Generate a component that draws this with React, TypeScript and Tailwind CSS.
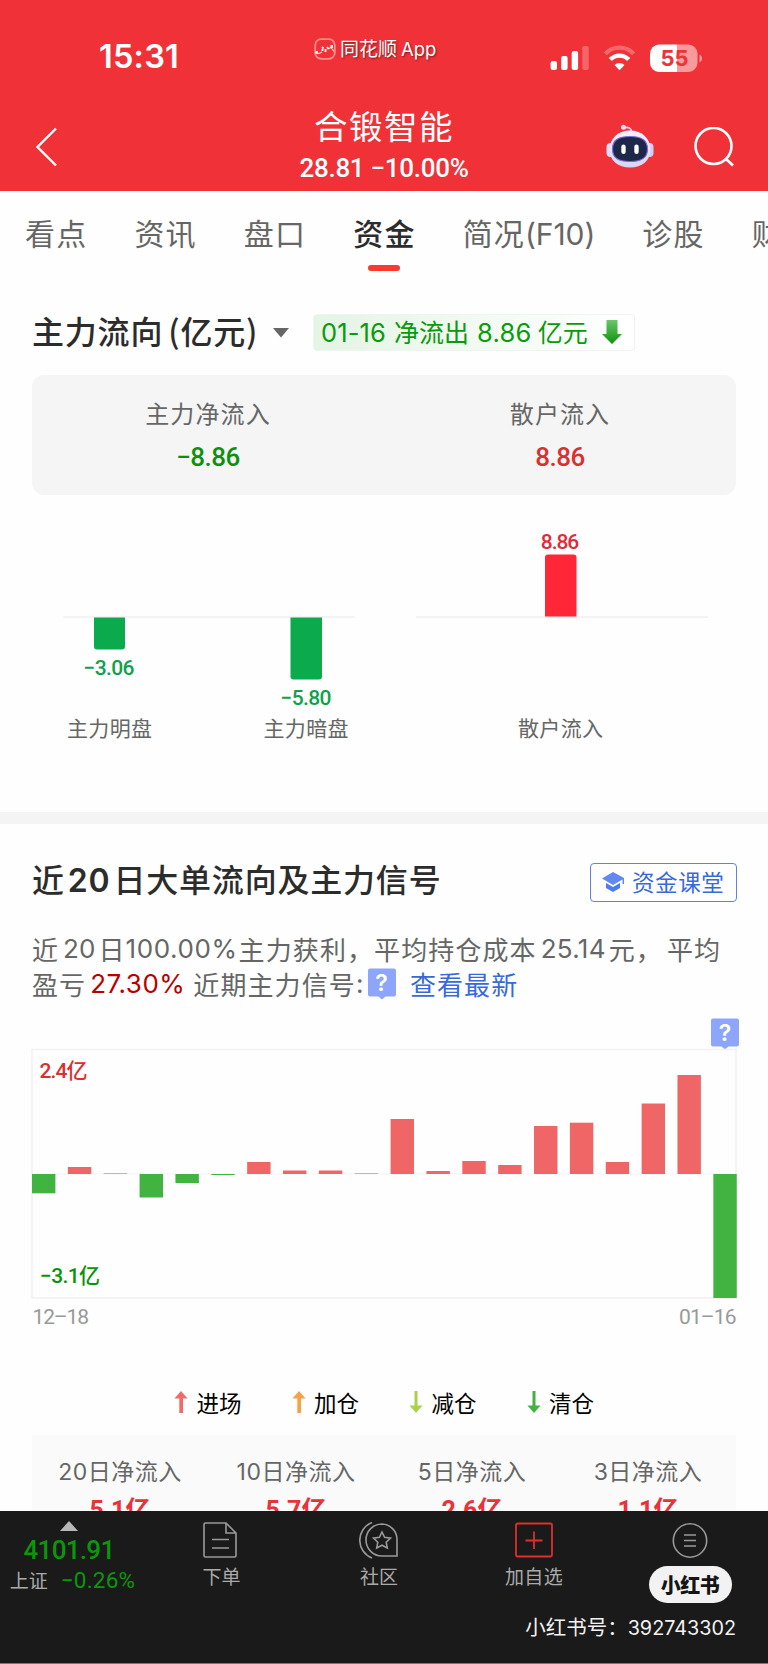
import React from "react";

const tabs = ["看点", "资讯", "盘口", "资金", "简况(F10)", "诊股", "财务"];

const dailyFlow = [
  -19.3, 7, 1, -23.5, -9, -1, 12, 3.5, 3.5, 1, 55, 3, 13, 9, 48, 51.3, 12, 70.5, 99, -124,
];

const legend = [
  { label: "进场", color: "#ee6b68", up: true },
  { label: "加仓", color: "#f9a14a", up: true },
  { label: "减仓", color: "#acd04c", up: false },
  { label: "清仓", color: "#41b340", up: false },
];

const periods = [
  { label: "20日净流入", value: "5.1亿" },
  { label: "10日净流入", value: "5.7亿" },
  { label: "5日净流入", value: "2.6亿" },
  { label: "3日净流入", value: "1.1亿" },
];

function StatusIcons() {
  return (
    <svg width="156" height="30" viewBox="0 0 156 30" fill="#fff">
      <rect x="2.6" y="18" width="6.4" height="9" rx="2" />
      <rect x="13.2" y="13" width="6.4" height="14" rx="2" />
      <rect x="23.7" y="8" width="6.4" height="19" rx="2" />
      <rect x="34.3" y="3" width="6.4" height="24" rx="2" opacity=".25" />
      <g fill="none" stroke="#fff" strokeWidth="4.4">
        <path d="M57.3 10.8a19.5 19.5 0 0 1 28.4 0" opacity=".27" />
        <path d="M62.3 16.6a12.6 12.6 0 0 1 18.4 0" />
      </g>
      <path d="M71.5 27.3l-5-5.2a7.3 7.3 0 0 1 10 0z" />
      <path d="M111 1.5h29.500a9 9 0 0 1 9 9v9.500a9 9 0 0 1-9 9H129V1.500z" opacity=".5" />
      <path d="M129 1.500v27.500h-18a9 9 0 0 1-9-9v-9.500a9 9 0 0 1 9-9z" />
      <path d="M151.500 11.500q2.500 1 2.500 4t-2.500 4z" opacity=".5" />
      <text x="126.500" y="22.500" textAnchor="middle" fill="#f03238" fontFamily="Inter" fontWeight="700" fontSize="22">
        55
      </text>
    </svg>
  );
}

function AppLogo() {
  return (
    <svg width="22" height="22" viewBox="0 0 22 22" fill="none">
      <rect x="1.200" y="1.200" width="19.600" height="19.600" rx="6" stroke="#ff8f88" strokeWidth="1.800" />
      <path d="M1 14.500l4 1 3-1.500M14 11l3-1.500 3 4" stroke="#ffc9c4" strokeWidth="1.200" />
      <path d="M8 9l1.500 1.500M7.500 12.500l2-1M11.500 11v3M13 9l1.500 2" stroke="#fff" strokeWidth="1.800" />
      <path d="M16.500 7h2.500v3h-2.500zM1.500 13h2.500v2.500H1.500z" fill="#fff" />
    </svg>
  );
}

function Robot() {
  return (
    <svg width="48" height="44" viewBox="0 0 48 44">
      <defs>
        <linearGradient id="shell" x1="0" y1="0" x2="0" y2="1">
          <stop offset="0" stopColor="#fbeefc" />
          <stop offset="1" stopColor="#d6d6f4" />
        </linearGradient>
      </defs>
      <path d="M18 3.500q7-1 7.500 4" fill="none" stroke="#f3d3e6" strokeWidth="1.800" />
      <circle cx="17.500" cy="3.300" r="2.500" fill="#ffdcea" />
      <rect x="0.500" y="19" width="8" height="14" rx="4" fill="#dcdcf8" />
      <rect x="39.500" y="19" width="8" height="14" rx="4" fill="#cfcff5" />
      <path d="M24 6.500c12 0 20.500 8 20.500 19S36 43.500 24 43.500 3.500 36.500 3.500 25.500 12 6.500 24 6.500z" fill="url(#shell)" />
      <path
        d="M24 12.500c11 0 17.500 3 17.500 12.500S35 37.500 24 37.500 6.500 34.500 6.500 25 13 12.500 24 12.500z"
        fill="#1c2749"
        stroke="#7a68dc"
        strokeWidth="1.200"
      />
      <rect x="15.300" y="20.500" width="4.400" height="9.500" rx="2.200" fill="#fff" />
      <rect x="28.300" y="20.500" width="4.400" height="9.500" rx="2.200" fill="#fff" />
    </svg>
  );
}

function HelpBubble() {
  return (
    <svg width="28" height="32" viewBox="0 0 28 32" className="shrink-0">
      <path d="M2 .5h24a2 2 0 0 1 2 2v24a2 2 0 0 1-2 2h-8.500L14 31.500l-3.500-3H2a2 2 0 0 1-2-2v-24a2 2 0 0 1 2-2z" fill="#8da6fb" />
      <text x="14" y="22.500" textAnchor="middle" fill="#fff" fontFamily="Inter" fontWeight="600" fontSize="23">
        ?
      </text>
    </svg>
  );
}

function Header() {
  return (
    <header className="h-[191px] bg-[#f03238] text-white">
      <div className="flex h-[105px] items-center pt-[10px]">
        <div className="ml-[99px] w-[215px] font-[Inter] text-[32.500px] font-semibold tracking-[0.200px]">15:31</div>
        <div className="mb-[18px] flex w-[234px] items-center gap-[4px] text-[19px] [text-shadow:1px_1px_2px_rgba(0,0,0,0.5)]">
          <AppLogo />
          <span>
            同花顺<span className="ml-1 font-[Inter] text-[18.500px]">App</span>
          </span>
        </div>
        <StatusIcons />
      </div>
      <div className="flex h-[84px] items-center">
        <svg width="24" height="40" viewBox="0 0 24 40" fill="none" className="ml-9" stroke="#fff" strokeWidth="2.400">
          <path d="M20 1.500L1.500 20 20 38.500" />
        </svg>
        <div className="-mt-[6px] ml-[204px] flex w-[240px] flex-col items-center">
          <h1 className="text-[33.500px] leading-9 tracking-[1.500px]">合锻智能</h1>
          <p className="mt-[11px] font-[Roboto] text-[26px] font-medium leading-7 tracking-[-0.300px]">28.81 −10.00%</p>
        </div>
        <div className="-mt-[2px] ml-[102px]">
          <Robot />
        </div>
        <svg width="40" height="40" viewBox="0 0 40 40" fill="none" className="ml-10" stroke="#fff" strokeWidth="2.600">
          <circle cx="19.500" cy="19" r="18" />
          <path d="M31.500 31.500l7.500 7" />
        </svg>
      </div>
    </header>
  );
}

function Tabs() {
  return (
    <nav className="flex h-[84px] gap-[47px] overflow-hidden whitespace-nowrap pl-[25px] pt-[20px] text-[30px] leading-[42px] text-[#666]">
      {tabs.map((tab) => (
        <div key={tab} className="flex shrink-0 flex-col items-center">
          {tab === "资金" ? (
            <>
              <span className="font-medium tracking-[1.200px] text-[#2c2c2c]">{tab}</span>
              <i className="mt-[12px] h-[6px] w-8 rounded-full bg-[#fb3a2f]" />
            </>
          ) : (
            <span className="tracking-[1.200px]">
              {tab.slice(0, 2)}
              <span className="font-[Inter] tracking-[-0.100px]">{tab.slice(2)}</span>
            </span>
          )}
        </div>
      ))}
    </nav>
  );
}

function FlowChart() {
  return (
    <svg width="768" height="317" viewBox="0 495 768 317" className="block" textAnchor="middle">
      <path d="M63.500 617h291M416 617h292" stroke="#efefef" strokeWidth="1.500" />
      <path d="M94 617.500h31v29q0 3-3 3h-25q-3 0-3-3z" fill="#0bab4d" />
      <path d="M290.500 617.500h31.500v59q0 3-3 3h-25.500q-3 0-3-3z" fill="#0bab4d" />
      <path d="M545 616.500v-59q0-3 3-3h25.500q3 0 3 3v59z" fill="#ff2638" />
      <g fontFamily="Roboto" fontSize="21" fontWeight="500" fill="#0fa14c">
        <text x="109" y="675" textLength="51">−3.06</text>
        <text x="306" y="704.500" textLength="51">−5.80</text>
        <text x="560" y="548.500" textLength="38.500" fill="#e02b3c">8.86</text>
      </g>
      <g fontSize="21" fill="#666">
        <text x="109.500" y="735.500" textLength="85">主力明盘</text>
        <text x="306" y="735.500" textLength="85">主力暗盘</text>
        <text x="560.500" y="735.500" textLength="85">散户流入</text>
      </g>
    </svg>
  );
}

function MainFlow() {
  return (
    <section>
      <div className="flex h-[100px] items-center pl-[32px] pt-[14px]">
        <h2 className="-mt-[4px] w-[241px] whitespace-nowrap text-[32px] font-medium tracking-[0.800px] text-[#2c2c2c]">
          主力流向<span className="ml-[5px]">(亿元)</span>
        </h2>
        <svg width="16" height="10" className="mt-[2px]">
          <path d="M0 0h16l-8 9.500z" fill="#666" />
        </svg>
        <div className="ml-[24px] flex h-[37px] w-[322px] items-center whitespace-nowrap rounded border border-[#edf6ee] bg-linear-to-r from-[#e4f4e5] to-white pl-[7px] text-[25px] leading-[33px] text-[#0a9a0a]">
          <span className="font-[Inter] text-[25.500px] tracking-[0.100px]">01-16</span>
          <span className="-mt-[2px] ml-[8px]">净流出</span>
          <span className="ml-[8px] font-[Inter] text-[25.500px] tracking-[0.300px]">8.86</span>
          <span className="-mt-[2px] ml-[6px] w-[50px]">亿元</span>
          <svg width="20" height="24" viewBox="0 0 20 24" className="ml-[14px]">
            <defs>
              <linearGradient id="down" x1="0" y1="0" x2="0" y2="1">
                <stop offset="0" stopColor="#6cc56c" />
                <stop offset="1" stopColor="#0b930b" />
              </linearGradient>
            </defs>
            <path d="M4.500 0h11v14H20L10 24 0 14h4.500z" fill="url(#down)" />
          </svg>
        </div>
      </div>
      <div className="mx-8 grid h-[120px] grid-cols-2 rounded-xl bg-[#f5f5f5] text-center">
        <div>
          <div className="mt-[20px] text-[24px] leading-9 tracking-[1.100px] text-[#666]">主力净流入</div>
          <div className="mt-[8px] font-[Roboto] text-[26px] font-medium leading-9 tracking-[-0.500px] text-[#0a930a]">−8.86</div>
        </div>
        <div>
          <div className="mt-[20px] text-[24px] leading-9 tracking-[1.100px] text-[#666]">散户流入</div>
          <div className="mt-[8px] font-[Roboto] text-[26px] font-medium leading-9 tracking-[-0.500px] text-[#dc2f2f]">8.86</div>
        </div>
      </div>
      <FlowChart />
    </section>
  );
}

function DailyChart() {
  return (
    <svg width="768" height="300" viewBox="0 1040 768 300" className="block">
      <rect x="32" y="1049.500" width="704" height="248.500" fill="none" stroke="#f1f1f1" strokeWidth="1.500" />
      <path d="M32 1174h704" stroke="#f3f3f3" />
      {dailyFlow.map((v, i) => (
        <rect
          key={i}
          x={32 + i * 35.86}
          y={v > 0 ? 1174 - v : 1174}
          width="23.400"
          height={Math.abs(v)}
          fill={v > 0 ? "#f06565" : "#41b340"}
          opacity={v === 1 ? 0.6 : 1}
        />
      ))}
      <g fontFamily="Roboto, 'Noto Sans CJK SC', sans-serif" fontSize="21" fontWeight="500">
        <text x="39.500" y="1077.500" textLength="48" fill="#dc2f2f">2.4亿</text>
        <text x="40" y="1282.500" textLength="60" fill="#0a930a">−3.1亿</text>
      </g>
      <g fontFamily="Roboto" fontSize="21" fill="#999">
        <text x="32.500" y="1323.500" textLength="56.500">12–18</text>
        <text x="679" y="1323.500" textLength="57.500">01–16</text>
      </g>
    </svg>
  );
}

function BigOrders() {
  return (
    <section className="border-t-[12px] border-[#f4f4f4]">
      <div className="mt-[38px] flex h-[40px] items-center justify-between pl-8 pr-[31px]">
        <h2 className="-mt-[6px] whitespace-nowrap text-[32px] font-medium tracking-[0.800px] text-[#2c2c2c]">
          近<span className="mx-[3px] font-[Inter] font-semibold">20</span>日大单流向及主力信号
        </h2>
        <button className="flex h-[39px] w-[147px] items-center rounded border-[1.500px] border-[#5d84e4] pl-[11px] text-[#3769dd]">
          <svg width="22" height="20" viewBox="0 0 22 20" fill="#6288f2">
            <path d="M11 0l11 6v6h-1.500V7.500L11 13 0 6.500z" />
            <path d="M4 11l7 4 7-4v5l-7 4-7-4z" fill="#4d7bf0" />
          </svg>
          <span className="-mt-px ml-[8px] whitespace-nowrap text-[22.500px] tracking-[0.600px]">资金课堂</span>
        </button>
      </div>
      <div className="mt-[29px] pl-8 text-[26px] leading-[35px] tracking-[1.100px] text-[#666]">
        <p className="flex whitespace-nowrap">
          近<span className="ml-1 mr-[3px] font-[Inter] tracking-[0px]">20</span>日
          <span className="mr-[1px] font-[Inter] tracking-[0.600px]">100.00%</span>主力获利，平均持仓成本
          <span className="ml-[4px] mr-[3px] font-[Inter] tracking-[0.300px]">25.14</span>元，
          <span className="ml-[4px]">平均</span>
        </p>
        <p className="flex items-center whitespace-nowrap">
          盈亏<span className="ml-[4px] mr-2 font-[Inter] tracking-[0.500px] text-[#b80000]">27.30%</span>
          近期主力信号<span className="mr-[4px] w-2 font-[Inter]">:</span>
          <HelpBubble />
          <span className="ml-[14px] text-[#3769dd]">查看最新</span>
        </p>
      </div>
      <div className="-mb-[10px] mt-[17px] flex h-[32px] justify-end pr-[29px]">
        <HelpBubble />
      </div>
      <DailyChart />
      <div className="flex h-[95px] gap-[50px] pl-[174px] pt-[45px] text-[22.500px] leading-[34px] text-black">
        {legend.map((item) => (
          <div key={item.label} className="flex h-[34px] w-[67.500px] items-center justify-between whitespace-nowrap">
            <svg width="14" height="22" viewBox="0 0 14 22" fill={item.color}>
              {item.up ? <path d="M7 0l6.500 7.500H9V22H5.300V7.500H.5z" /> : <path d="M7 22l6.500-7.500H8.500V0H5.500v14.500H.5z" />}
            </svg>
            <span className="-mt-px">{item.label}</span>
          </div>
        ))}
      </div>
      <div className="mx-8 grid h-[76px] grid-cols-4 overflow-hidden bg-[#fafafa] text-center">
        {periods.map((p) => (
          <div key={p.label}>
            <div className="mt-[20px] font-[Inter,'Noto_Sans_CJK_SC',sans-serif] text-[23px] leading-[34px] tracking-[0.500px] text-[#666]">{p.label}</div>
            <div className="mt-[4px] font-[Roboto,'Noto_Sans_CJK_SC',sans-serif] text-[25px] font-bold leading-9 text-[#e5353a]">{p.value}</div>
          </div>
        ))}
      </div>
    </section>
  );
}

function BottomBar() {
  return (
    <footer className="flex h-[153px] flex-col border-b border-[#777] bg-[#1a1a1a] text-[#aaa]">
      <div className="flex h-[95px] text-[19px]">
        <div className="flex w-[138px] flex-col items-center pt-[10px]">
          <svg width="18" height="10">
            <path d="M9 0l9 10H0z" fill="#b8b8b8" />
          </svg>
          <div className="mt-[3px] font-[Roboto] text-[26px] font-medium leading-8 tracking-[-0.700px] text-[#0b960b]">4101.91</div>
          <div className="ml-[7px] flex items-center gap-[13px] whitespace-nowrap leading-7">
            <span>上证</span>
            <span className="font-[Roboto] text-[22.500px] tracking-[0.200px] text-[#0b960b]">−0.26%</span>
          </div>
        </div>
        <div className="flex w-[164px] flex-col items-center pt-[11px]">
          <svg width="34" height="36" viewBox="0 0 34 36" fill="none" stroke="#999" strokeWidth="1.600">
            <path d="M1 2.500Q1 1 2.500 1H23l10 10v22.500q0 1.500-1.500 1.500h-29Q1 35 1 33.500zM23 1v10h10M9 17.500h17M9 26h17" />
          </svg>
          <span className="ml-[3px] mt-[4px] leading-7">下单</span>
        </div>
        <div className="flex w-[154px] flex-col items-center pt-[10px]">
          <svg width="40" height="38" viewBox="0 0 40 38" fill="none" stroke="#999" strokeWidth="1.600">
            <path d="M13 1.500a19 19 0 0 0 0 35.500" />
            <path d="M23 3a16 16 0 1 0 0 32h15V19A15.500 15.500 0 0 0 23 3z" />
            <path d="M23 11l2.600 5.300 5.900.8-4.300 4.100 1.100 5.800-5.300-2.800-5.300 2.800 1.100-5.800-4.300-4.100 5.900-.8z" />
          </svg>
          <span className="mt-[3px] leading-7">社区</span>
        </div>
        <div className="flex w-[156px] flex-col items-center pt-[11px]">
          <svg width="38" height="36" viewBox="0 0 38 36" fill="none" stroke="#df2e2e" strokeWidth="1.800">
            <rect x="1" y="1.500" width="36" height="33" rx="1.500" />
            <path d="M10.500 18.500h17M19 9.500v17.500" />
          </svg>
          <span className="mt-[4px] leading-7 tracking-[0.400px]">加自选</span>
        </div>
        <div className="flex w-[156px] flex-col items-center pt-[11px]">
          <svg width="36" height="36" viewBox="0 0 36 36" fill="none" stroke="#999" strokeWidth="1.600">
            <circle cx="18" cy="18.500" r="16.700" />
            <path d="M12 13h12M12 18.500h12M12 24h12" />
          </svg>
          <span className="mt-[8px] flex h-[37px] w-[83px] items-center justify-center rounded-full bg-[#f2f2f2] text-[20px] font-black tracking-[-0.500px] text-[#151515]">
            小红书
          </span>
        </div>
      </div>
      <div className="pr-8 text-right text-[20.500px] leading-[41px] text-[#f2f2f2]">
        小红书号：<span className="font-[Inter] text-[19.800px]">392743302</span>
      </div>
    </footer>
  );
}

export default function App() {
  return (
    <div className="h-[1664px] w-[768px] overflow-hidden bg-[#fefefe] font-['Noto_Sans_CJK_SC',sans-serif]">
      <Header />
      <Tabs />
      <MainFlow />
      <BigOrders />
      <BottomBar />
    </div>
  );
}
